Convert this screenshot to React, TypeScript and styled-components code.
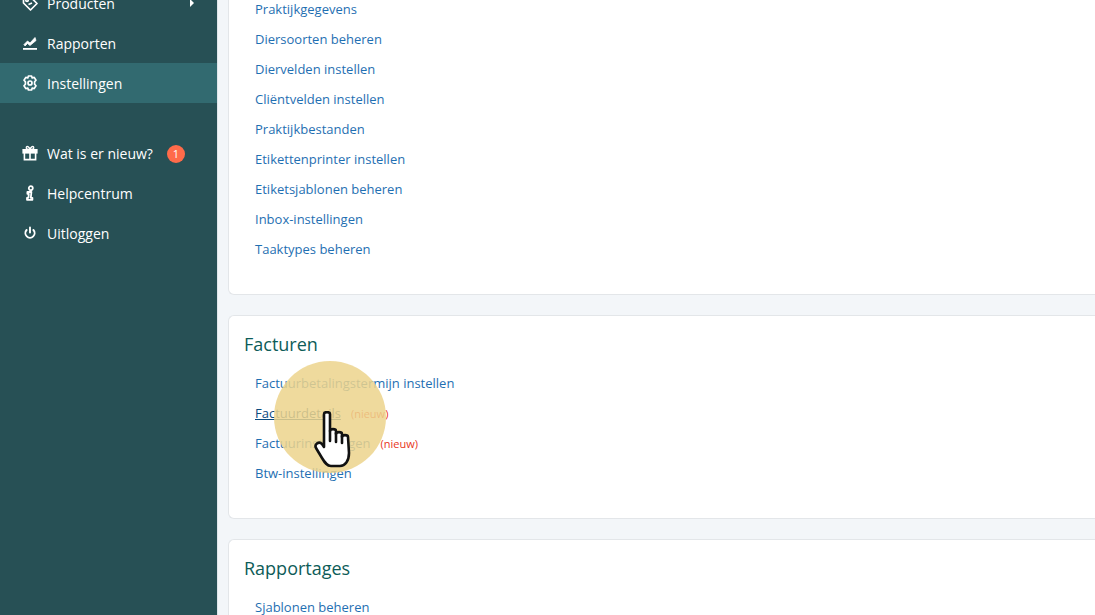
import styled, { createGlobalStyle } from 'styled-components';
import { ReactNode } from 'react';

const GlobalStyle = createGlobalStyle`
  html, body {
    margin: 0;
    height: 100%;
    overflow: hidden;
    background: #f3f6f9;
    font-family: "Open Sans", "Liberation Sans", sans-serif;
  }
`;

const TagIcon = () => (
  <svg width="16" height="16" viewBox="0 0 16 16" fill="none" stroke="#fff" strokeWidth="1.7">
    <path d="M1.5 3 L1.5 8 L8.5 15 L15 8.5 L8 1.5 L3 1.5 Z" strokeLinejoin="round" />
    <circle cx="5" cy="5.2" r="1.2" />
    <path d="M6.5 9.5 L10 8" />
  </svg>
);

const ChartIcon = () => (
  <svg width="16" height="16" viewBox="0 0 16 16" fill="none">
    <path d="M2 9.5 L5.5 6 L8 8 L13 2.5 L14 5.5 L8 10.5 L5.5 8.5 L3 11 Z" fill="#fff" stroke="#fff" strokeWidth="0.8" strokeLinejoin="round" />
    <rect x="1" y="13" width="14" height="1.8" fill="#fff" />
  </svg>
);

const GearIcon = () => (
  <svg width="16" height="16" viewBox="0 0 16 16" fill="none" stroke="#fff" strokeWidth="1.7" strokeLinejoin="round">
    <path d="M6.4 1 H9.6 L10.2 3 L12.2 2.4 L14 5.2 L12.6 6.8 V9.2 L14 10.8 L12.2 13.6 L10.2 13 L9.6 15 H6.4 L5.8 13 L3.8 13.6 L2 10.8 L3.4 9.2 V6.8 L2 5.2 L3.8 2.4 L5.8 3 Z" />
    <circle cx="8" cy="8" r="2" />
  </svg>
);

const GiftIcon = () => (
  <svg width="16" height="16" viewBox="0 0 16 16" fill="none" stroke="#fff" strokeWidth="1.6">
    <rect x="1.2" y="4.8" width="13.6" height="3" fill="#fff" />
    <path d="M2.4 8 V14.6 H13.6 V8 M8 4.8 V14.6" />
    <path d="M8 4.5 C5 4.5 3.6 3.4 4.4 2 C5.3 0.8 7.4 2 8 4.5 C8.6 2 10.7 0.8 11.6 2 C12.4 3.4 11 4.5 8 4.5 Z" strokeWidth="1.3" />
  </svg>
);

const InfoIcon = () => (
  <svg width="16" height="16" viewBox="0 0 16 16" fill="none" stroke="#fff" strokeWidth="1.8">
    <circle cx="8.8" cy="3.2" r="2" />
    <path d="M5.4 7 H9.4 L8.8 12.8 H10.4 V14.8 H5 V12.8 H6.4 L6.8 8.8 H5.4 Z" strokeLinejoin="round" />
  </svg>
);

const PowerIcon = () => (
  <svg width="16" height="16" viewBox="0 0 16 16" fill="none" stroke="#fff" strokeWidth="1.9" strokeLinecap="round">
    <path d="M8 2.5 V7.5" />
    <path d="M4.6 5 A4.6 4.6 0 1 0 11.4 5" />
  </svg>
);

const HandCursor = () => (
  <svg width="44" height="58" viewBox="0 0 44 58">
    <path
      d="M10 3 C10 0.5 16 0.5 16 3 V20 C16 17.5 22 17.5 22 20 V23 C22 20.5 28 20.5 28 23 V26 C28 23.5 34 23.5 34 26 L35 42 C35 50 31 55 26 55 H17 C13 55 11 52 8 47 L2 37 C0 33 5 30 8 33 L10 36 Z"
      fill="#fff"
      stroke="#111"
      strokeWidth="2.6"
      strokeLinejoin="round"
    />
    <path d="M16 20 V30 M22 22 V31 M28 25 V32" stroke="#111" strokeWidth="2.6" strokeLinecap="round" />
  </svg>
);

function NavEntry({ icon, label, active, children }: { icon: ReactNode; label: string; active?: boolean; children?: ReactNode }) {
  return (
    <NavRow $active={active}>
      <IconSlot>{icon}</IconSlot>
      <span>{label}</span>
      {children}
    </NavRow>
  );
}

const settingsLinks = [
  'Praktijkgegevens',
  'Diersoorten beheren',
  'Diervelden instellen',
  'Cliëntvelden instellen',
  'Praktijkbestanden',
  'Etikettenprinter instellen',
  'Etiketsjablonen beheren',
  'Inbox-instellingen',
  'Taaktypes beheren',
];

export default function App() {
  return (
    <>
      <GlobalStyle />
      <Page>
        <Sidebar>
          <NavEntry icon={<TagIcon />} label="Producten">
            <Caret />
          </NavEntry>
          <NavEntry icon={<ChartIcon />} label="Rapporten" />
          <NavEntry icon={<GearIcon />} label="Instellingen" active />
          <NavGap />
          <NavEntry icon={<GiftIcon />} label="Wat is er nieuw?">
            <Badge>1</Badge>
          </NavEntry>
          <NavEntry icon={<InfoIcon />} label="Helpcentrum" />
          <NavEntry icon={<PowerIcon />} label="Uitloggen" />
        </Sidebar>
        <Main>
          <TopCard>
            <LinkList>
              {settingsLinks.map((l) => (
                <LinkRow key={l}>
                  <SettingLink>{l}</SettingLink>
                </LinkRow>
              ))}
            </LinkList>
          </TopCard>
          <Card>
            <CardTitle>Facturen</CardTitle>
            <LinkList>
              <LinkRow>
                <SettingLink>Factuurbetalingstermijn instellen</SettingLink>
              </LinkRow>
              <LinkRow>
                <SettingLink $hover>Factuurdetails</SettingLink>
                <NewTag>(nieuw)</NewTag>
              </LinkRow>
              <LinkRow>
                <SettingLink>Factuurinstellingen</SettingLink>
                <NewTag>(nieuw)</NewTag>
              </LinkRow>
              <LinkRow>
                <SettingLink>Btw-instellingen</SettingLink>
              </LinkRow>
            </LinkList>
          </Card>
          <Card>
            <CardTitle>Rapportages</CardTitle>
            <LinkList>
              <LinkRow>
                <SettingLink>Sjablonen beheren</SettingLink>
              </LinkRow>
            </LinkList>
          </Card>
        </Main>
        <Highlight />
        <CursorWrap>
          <HandCursor />
        </CursorWrap>
      </Page>
    </>
  );
}

const Page = styled.div`
  position: relative;
  display: flex;
  width: 1095px;
  height: 615px;
  overflow: hidden;
  background: #f3f6f9;
`;

const Sidebar = styled.nav`
  flex: 0 0 217px;
  margin-top: -17px;
  height: 632px;
  background: #275055;
  border-right: 0;
`;

const NavRow = styled.div<{ $active?: boolean }>`
  position: relative;
  display: flex;
  align-items: center;
  height: 40px;
  padding-left: 22px;
  font-size: 14px;
  color: #fff;
  background: ${(p) => (p.$active ? '#326a70' : 'transparent')};
`;

const IconSlot = styled.span`
  display: flex;
  width: 16px;
  height: 16px;
  margin-right: 9px;
`;

const NavGap = styled.div`
  height: 30px;
`;

const Caret = styled.span`
  position: absolute;
  left: 190px;
  top: 16px;
  width: 0;
  height: 0;
  border-left: 4px solid #fff;
  border-top: 4px solid transparent;
  border-bottom: 4px solid transparent;
`;

const Badge = styled.span`
  position: absolute;
  left: 167px;
  top: 12px;
  width: 18px;
  height: 18px;
  border-radius: 50%;
  background: #ff6b4a;
  color: #fff;
  font-size: 11px;
  line-height: 18px;
  text-align: center;
`;

const Main = styled.main`
  flex: 1;
  min-width: 0;
  padding-left: 10px;
  margin-top: -40px;
  display: flex;
  flex-direction: column;
  gap: 20px;
  border-left: 1px solid #dfe5ea;
`;

const Card = styled.section`
  flex: none;
  box-sizing: border-box;
  background: #fff;
  border: 1px solid #e3e6e9;
  border-right: 0;
  border-radius: 6px 0 0 6px;
  padding: 14px 15px 30px;
`;

const TopCard = styled(Card)`
  padding-top: 33px;
`;

const CardTitle = styled.h2`
  margin: 0 0 10px;
  font-size: 18px;
  font-weight: 400;
  line-height: 28px;
  color: #0d5c58;
`;

const LinkList = styled.ul`
  list-style: none;
  margin: 0;
  padding: 0 0 0 11px;
`;

const LinkRow = styled.li`
  height: 30px;
  display: flex;
  align-items: center;
  font-size: 13px;
`;

const SettingLink = styled.a<{ $hover?: boolean }>`
  color: ${(p) => (p.$hover ? '#0a4a7e' : '#1f6fb2')};
  text-decoration: ${(p) => (p.$hover ? 'underline' : 'none')};
`;

const NewTag = styled.span`
  margin-left: 10px;
  font-size: 11px;
  color: #e8341c;
`;

const Highlight = styled.div`
  position: absolute;
  left: 274px;
  top: 361px;
  width: 112px;
  height: 112px;
  border-radius: 50%;
  background: rgba(236, 212, 140, 0.85);
`;

const CursorWrap = styled.div`
  position: absolute;
  left: 314px;
  top: 411px;
  line-height: 0;
`;
